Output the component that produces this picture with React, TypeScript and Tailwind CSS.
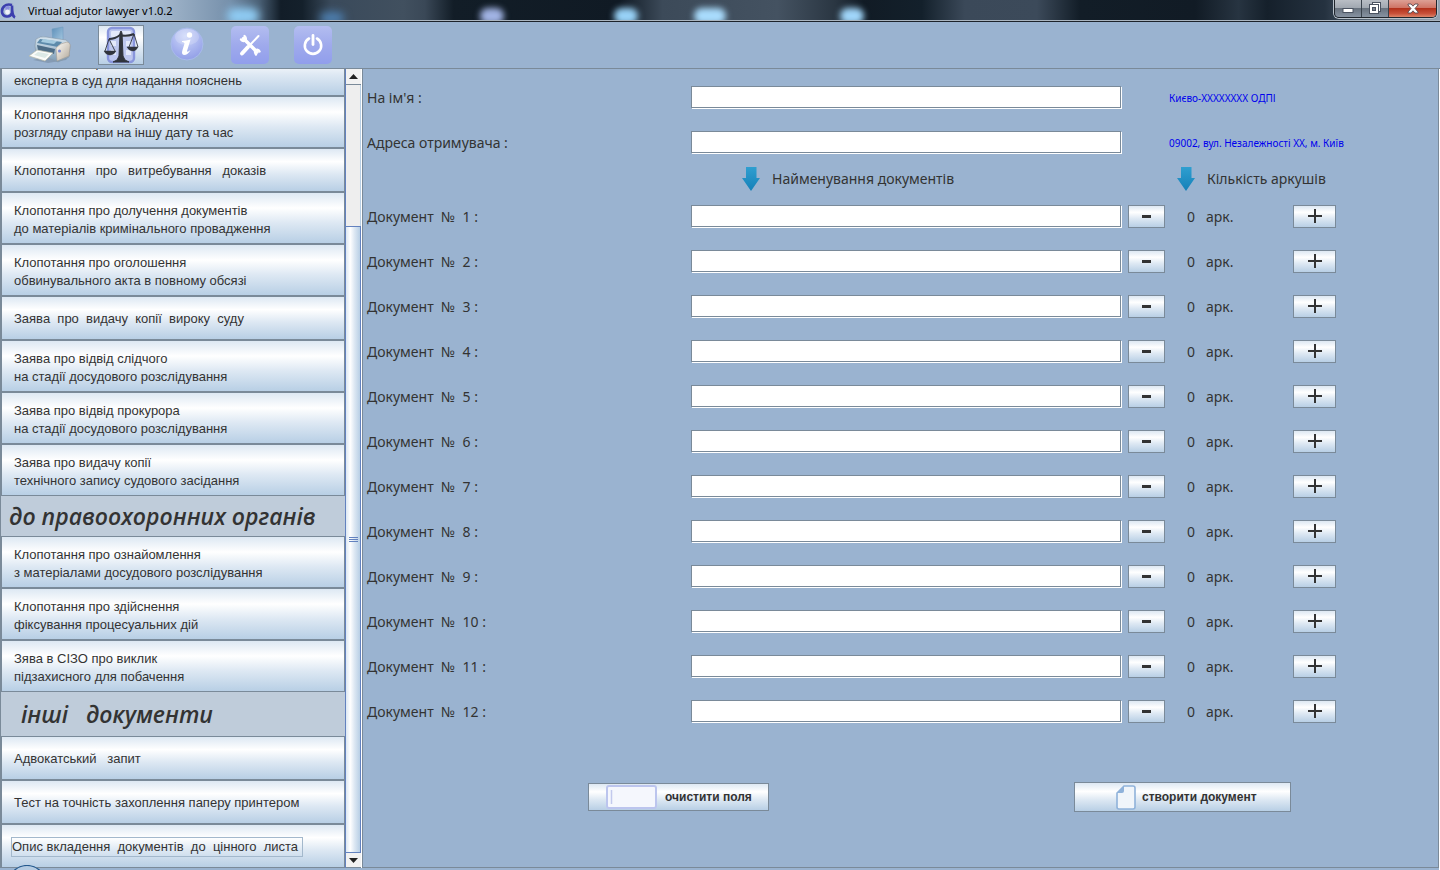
import React, { useState } from "react";

type Entry = { kind: "item"; lines: string[]; focused?: boolean } | { kind: "title"; text: string; tall?: boolean };

const entries: Entry[] = [
  { kind: "item", lines: ["Клопотання про виклик", "експерта в суд для надання пояснень"] },
  { kind: "item", lines: ["Клопотання про відкладення", "розгляду справи на іншу дату та час"] },
  { kind: "item", lines: ["Клопотання   про   витребування   доказів"] },
  { kind: "item", lines: ["Клопотання про долучення документів", "до матеріалів кримінального провадження"] },
  { kind: "item", lines: ["Клопотання про оголошення", "обвинувального акта в повному обсязі"] },
  { kind: "item", lines: ["Заява  про  видачу  копії  вироку  суду"] },
  { kind: "item", lines: ["Заява про відвід слідчого", "на стадії досудового розслідування"] },
  { kind: "item", lines: ["Заява про відвід прокурора", "на стадії досудового розслідування"] },
  { kind: "item", lines: ["Заява про видачу копії", "технічного запису судового засідання"] },
  { kind: "title", text: "до правоохоронних органів" },
  { kind: "item", lines: ["Клопотання про ознайомлення", "з матеріалами досудового розслідування"] },
  { kind: "item", lines: ["Клопотання про здійснення", "фіксування процесуальних дій"] },
  { kind: "item", lines: ["Зява в СІЗО про виклик", "підзахисного для побачення"] },
  { kind: "title", text: "інші   документи", tall: true },
  { kind: "item", lines: ["Адвокатський   запит"] },
  { kind: "item", lines: ["Тест на точність захоплення паперу принтером"] },
  { kind: "item", lines: ["Опис вкладення  документів  до  цінного  листа"], focused: true },
];

const metal = "border border-[#7a8a99] bg-[linear-gradient(#dde8f3_0%,#ffffff_30%,#dde8f3_60%,#b8cfe5_100%)]";
const field = "block h-[22px] w-full border border-[#7a8a99] bg-white px-1 text-[15px] text-[#333] shadow-[1px_1px_0_#fff] outline-none";

function AppLogo() {
  return (
    <svg width="16" height="18" viewBox="0 0 16 18" fill="none" aria-hidden="true">
      <path d="M12 3 C5 1 1.500 6 2 10 C2.500 15 10 16.500 12 11 V3.500 C12 9 12 14 15 15.500" stroke="#3b3fae" strokeWidth="2.600" />
      <path d="M5 5 Q8 3 10 5 L9 8 L6 9 Z" fill="#8a8fdf" />
      <circle cx="7.500" cy="10" r="2.400" fill="#eef1fa" />
    </svg>
  );
}

function PrinterIcon() {
  return (
    <svg width="44" height="38" viewBox="0 0 44 38" aria-hidden="true">
      <defs>
        <linearGradient id="pr-paper" x1="0" y1="0" x2="1" y2="1">
          <stop offset="0" stopColor="#5d8fb9" />
          <stop offset="1" stopColor="#a9cbe3" />
        </linearGradient>
        <linearGradient id="pr-body" x1="0" y1="0" x2="0" y2="1">
          <stop offset="0" stopColor="#d8e6f0" />
          <stop offset="1" stopColor="#7c9bb5" />
        </linearGradient>
        <linearGradient id="pr-side" x1="0" y1="0" x2="1" y2="1">
          <stop offset="0" stopColor="#fffdf8" />
          <stop offset="1" stopColor="#b0a698" />
        </linearGradient>
      </defs>
      <path d="M5 34 L20 37 L38 34 L42 29 L20 30 Z" fill="#6d7f93" opacity=".45" />
      <path d="M24 3 L35 1 L35 17 L25 16 Z" fill="url(#pr-paper)" stroke="#6f9cc0" strokeWidth=".6" />
      <path d="M8 13 Q12 10 18 11 L38 14 Q42 16 42 20 L41 31 L30 36 L8 27 Q6 20 8 13Z" fill="url(#pr-body)" stroke="#8797a6" strokeWidth=".6" />
      <path d="M12 13 L34 16 L30 21 L9 17Z" fill="#5e8bab" />
      <path d="M15 13 L29 15 L26 18 L13 16Z" fill="#a4cadf" />
      <path d="M9 19 L27 23 L26 28 L10 24Z" fill="#4d6c86" />
      <path d="M28 22 Q32 17 39 16 Q43 17 42 21 L41 30 L29 35Z" fill="url(#pr-side)" stroke="#a49c94" strokeWidth=".6" />
      <circle cx="31.500" cy="25" r="1.500" fill="#7886d0" />
      <path d="M9 24 L25 27 L17 35 L1 30Z" fill="#fbfcfa" stroke="#b5b7a8" strokeWidth=".7" />
      <path d="M10 26 L21 28 L17 32 L6 29Z" fill="#dce9e6" />
    </svg>
  );
}

function ScalesIcon() {
  return (
    <svg width="36" height="38" viewBox="0 0 36 38" aria-hidden="true">
      <rect x="5" y="2" width="26" height="34" rx="4" fill="#bdc7ee" stroke="#8996dc" strokeWidth="2.400" />
      <g fill="#e3e9fa">
        <rect x="8" y="5" width="20" height="6" rx="1" />
        <rect x="8" y="15" width="5" height="5" />
        <rect x="23" y="15" width="5" height="5" />
        <rect x="8" y="24" width="5" height="5" />
        <rect x="23" y="24" width="5" height="5" />
      </g>
      <g fill="#30343c" stroke="#30343c">
        <path d="M17 7 L18 5 L19 7 L20 30 L22 34 L26 36 H10 L14 34 L16 30Z" />
        <path d="M6 13 Q12 13 17 9 Q23 11 31 8" fill="none" strokeWidth="2" />
        <path d="M6 13 L2 25 M6 13 L12 25 M31 8 L26 21 M31 8 L35 21" fill="none" strokeWidth=".9" />
        <path d="M1 25 H13 Q11 29 7 29 Q3 29 1 25Z M24 21 H35 Q33 25 30 25 Q26 25 24 21Z" strokeWidth=".5" />
      </g>
    </svg>
  );
}

function InfoIcon() {
  return (
    <svg width="34" height="38" viewBox="0 0 34 38" aria-hidden="true">
      <defs>
        <radialGradient id="info-orb" cx=".45" cy=".25" r=".8">
          <stop offset="0" stopColor="#cfd9fa" />
          <stop offset=".6" stopColor="#a7b3ee" />
          <stop offset="1" stopColor="#8f9ce6" />
        </radialGradient>
      </defs>
      <circle cx="17" cy="18" r="16" fill="url(#info-orb)" stroke="#a8bbea" />
      <ellipse cx="17" cy="11" rx="12" ry="8" fill="#fff" opacity=".18" />
      <circle cx="19.500" cy="9" r="2.700" fill="#fff" />
      <path d="M12 15 Q16 14.500 20.500 13.500 L17 25 Q17 27 20.500 24 Q18 29 14 29 Q11 28.500 12.500 24 L14.500 17.500 Q14.500 16 12 16Z" fill="#fff" />
    </svg>
  );
}

function Tile({ children }: { children: React.ReactNode }) {
  return (
    <svg width="38" height="38" viewBox="0 0 38 38" fill="none" aria-hidden="true">
      <defs>
        <linearGradient id="tile-fill" x1="0" y1="0" x2="0" y2="1">
          <stop offset="0" stopColor="#b3bdf0" />
          <stop offset=".5" stopColor="#9faaec" />
          <stop offset="1" stopColor="#919eec" />
        </linearGradient>
      </defs>
      <rect width="38" height="38" rx="5" fill="url(#tile-fill)" />
      {children}
    </svg>
  );
}

function ToolsIcon() {
  return (
    <Tile>
      <g stroke="#fff" strokeLinecap="round">
        <path d="M12.500 12.500 L26 26" strokeWidth="3.400" />
        <path d="M27.500 10 L18 20" strokeWidth="2" />
        <path d="M17 21 L11 27.500" strokeWidth="4" />
        <path d="M10 13.500 Q12 16 14.500 14.500 Q15.500 12 13.500 10" strokeWidth="2.400" />
        <path d="M25 28.500 Q23 25.500 25 24 Q27.500 23 28.500 25.500" strokeWidth="2.400" />
      </g>
    </Tile>
  );
}

function PowerIcon() {
  return (
    <Tile>
      <path d="M15 12.500 A8.200 8.200 0 1 0 23 12.500" stroke="#fff" strokeWidth="2.600" strokeLinecap="round" />
      <path d="M19 9.500 V18.500" stroke="#fff" strokeWidth="2.800" strokeLinecap="round" />
    </Tile>
  );
}

function DownArrow() {
  return (
    <svg width="18" height="24" viewBox="0 0 18 24" className="shrink-0" aria-hidden="true">
      <defs>
        <linearGradient id="down-fill" x1="0" y1="0" x2="0" y2="1">
          <stop offset="0" stopColor="#2f9fd0" />
          <stop offset="1" stopColor="#1580b8" />
        </linearGradient>
      </defs>
      <path d="M4 0 H14.500 V11 H18 L9 24 L0 11 H4Z" fill="url(#down-fill)" />
    </svg>
  );
}

function WindowControls() {
  return (
    <div className="flex h-[18px] overflow-hidden rounded-b-[5px] border border-t-0 border-[#20262d] shadow-[0_0_0_1px_#b9c2cb]">
      <button aria-label="Згорнути" className="flex w-[27px] items-center justify-center border-r border-[#39424c] bg-[linear-gradient(#b9bec5_0%,#a1a8b1_45%,#69737f_50%,#8793a2_100%)]">
        <svg width="12" height="14" viewBox="0 0 12 14" aria-hidden="true">
          <rect x="1" y="6.500" width="10" height="4" fill="#fff" stroke="#4b5361" />
        </svg>
      </button>
      <button aria-label="Відновити" className="flex w-[27px] items-center justify-center border-r border-[#39424c] bg-[linear-gradient(#b9bec5_0%,#a1a8b1_45%,#69737f_50%,#8793a2_100%)]">
        <svg width="14" height="14" viewBox="0 0 14 14" aria-hidden="true">
          <rect x="4.500" y=".5" width="8" height="9" fill="#fff" stroke="#4b5361" />
          <rect x="1.500" y="2.500" width="9" height="9" fill="#fff" stroke="#4b5361" />
          <rect x="4.500" y="5.500" width="3" height="3" fill="#7b8491" stroke="#4b5361" />
        </svg>
      </button>
      <button aria-label="Закрити" className="flex w-[47px] items-center justify-center bg-[linear-gradient(#dda095_0%,#cf7566_45%,#b3321c_50%,#c8513a_80%,#dc8468_100%)]">
        <svg width="12" height="11" viewBox="0 0 12 11" aria-hidden="true">
          <path d="M1 1 H4 L6 3.200 L8 1 H11 V2 L8 5.500 L11 9 V10 H8 L6 7.800 L4 10 H1 V9 L4 5.500 L1 2Z" fill="#fff" stroke="#5a4a50" strokeWidth=".9" />
        </svg>
      </button>
    </div>
  );
}

function TitleBar() {
  return (
    <header className="flex h-[22px] shrink-0 items-start justify-between border-b border-[#1d232b] bg-[linear-gradient(90deg,#a9bed3_0%,#c6d3e2_6%,#a4b8cd_11%,#7690ab_16%,#4a6075_18%,#121d28_19.500%,#14202b_21%,#3a4a5b_23%,#41505f_28%,#3a4857_29.500%,#121d27_31.500%,#101a24_43%,#3c4a59_46%,#445261_54%,#2a3642_58%,#111b25_60%,#13202b_64%,#3b4959_67%,#3c4a5a_72%,#121d27_75%,#111b25_83%,#273441_86%,#15202b_88%,#253240_92%,#6b7b8b_96%,#93a3b2_100%)] shadow-[inset_0_-1px_0_#aab5c0]">
      <div className="relative h-5 w-full">
        <div className="absolute inset-0 overflow-hidden" aria-hidden="true">
          <span className="absolute left-[17%] top-2 h-4 w-8 rounded-full bg-[#8fccf4] blur-[4px]" />
          <span className="absolute left-[24%] top-3 h-3 w-6 rounded-full bg-[#4d7fb0] blur-[4px]" />
          <span className="absolute left-[36%] top-2 h-4 w-6 rounded-full bg-[#a1b3e4] blur-[3px]" />
          <span className="absolute left-[46%] top-2 h-4 w-6 rounded-full bg-[#98d2f7] blur-[3px]" />
          <span className="absolute left-[52%] top-2 h-4 w-8 rounded-full bg-[#a9dcfd] blur-[3px]" />
          <span className="absolute left-[63%] top-2 h-4 w-6 rounded-full bg-[#a0d6fa] blur-[3px]" />
        </div>
        <div className="relative flex h-[22px] items-center gap-3">
          <AppLogo />
          <h1 className="font-['Noto_Sans',sans-serif] text-[11px] leading-5 text-black">Virtual adjutor lawyer v1.0.2</h1>
        </div>
      </div>
      <div className="pr-[3px]">
        <WindowControls />
      </div>
    </header>
  );
}

function Sidebar() {
  return (
    <aside className="relative flex w-[362px] shrink-0 border-r border-white">
      <nav className="flex min-w-0 flex-1 flex-col justify-end overflow-hidden border-l border-[#7a8a99] bg-[#bfccda]">
        {entries.map((entry, i) =>
          entry.kind === "title" ? (
            <h2
              key={i}
              className={`flex shrink-0 items-center whitespace-pre font-['Open_Sans','Noto_Sans',sans-serif] font-semibold italic text-[#333] ${entry.tall ? "h-11 pl-5 text-[23px]" : "h-10 pl-2 text-[23px]"}`}
            >
              {entry.text}
            </h2>
          ) : (
            <button
              key={i}
              className={`flex shrink-0 items-center whitespace-pre text-left text-[13px] leading-[18px] text-[#333] ${metal} ${entry.lines.length > 1 ? "h-[52px] pt-1" : "h-11 pt-0.5"} ${entry.focused ? "pl-[9px]" : "pl-3"}`}
            >
              <span className={entry.focused ? "border border-[#a3b8cc] pr-1" : ""}>{entry.lines.join("\n")}</span>
            </button>
          ),
        )}
      </nav>
      <div className="flex w-4 shrink-0 flex-col border-l border-[#6382bf] bg-[#eee]" aria-hidden="true">
        <div className="flex h-4 items-center justify-center border-b border-[#7a8a99] bg-[#f2f2f2]">
          <svg width="9" height="5" viewBox="0 0 9 5"><path d="M4.500 0 L9 5 H0Z" fill="#222" /></svg>
        </div>
        <div className="h-[141px] border-r border-[#b8cfe5]" />
        <div className="flex flex-1 flex-col items-center justify-center gap-px border-y border-r border-[#6382bf] bg-[linear-gradient(90deg,#dde8f3_0%,#fff_30%,#dde8f3_60%,#b8cfe5_100%)]">
          <span className="h-px w-[9px] bg-[#6382bf]" />
          <span className="h-px w-[9px] bg-[#6382bf]" />
          <span className="h-px w-[9px] bg-[#6382bf]" />
        </div>
        <div className="flex h-[15px] items-center justify-center border-b border-[#7a8a99] bg-[#f2f2f2]">
          <svg width="9" height="5" viewBox="0 0 9 5"><path d="M0 0 H9 L4.500 5Z" fill="#222" /></svg>
        </div>
      </div>
    </aside>
  );
}

const formCols = "grid grid-cols-[324fr_437fr_310fr]";
const docCols = "grid grid-cols-[324fr_437fr_59fr_106fr_43fr_102fr]";
const label = "font-['Noto_Sans',sans-serif] text-[14px] leading-6 text-[#333] whitespace-pre";

function RecipientRow({ id, name, hint }: { id: string; name: string; hint: string }) {
  return (
    <div className={`${formCols} h-6`}>
      <label htmlFor={id} className={label}>{name}</label>
      <div className="pr-[7px]"><input id={id} type="text" className={field} /></div>
      <span className="whitespace-nowrap pl-[41px] font-['Noto_Sans',sans-serif] text-[10px] leading-6 text-[#0000ee]">{hint}</span>
    </div>
  );
}

function DocumentRow({ n }: { n: number }) {
  const [count, setCount] = useState(0);
  const id = `doc-${n}`;
  return (
    <div className={`${docCols} h-6`}>
      <label htmlFor={id} className={label}>{`Документ  №  ${n} :`}</label>
      <div className="pr-[7px]"><input id={id} type="text" className={field} /></div>
      <button aria-label={`Менше аркушів ${n}`} onClick={() => setCount(Math.max(0, count - 1))} className={`flex h-[23px] w-[37px] items-center justify-center ${metal}`}>
        <svg width="9" height="3" viewBox="0 0 9 3" aria-hidden="true"><path d="M0 0 H9 V3 H0Z" fill="#333" /></svg>
      </button>
      <span className={label}>{`${count}   арк.`}</span>
      <button aria-label={`Більше аркушів ${n}`} onClick={() => setCount(count + 1)} className={`flex h-[23px] w-full items-center justify-center pb-px ${metal}`}>
        <svg width="14" height="14" viewBox="0 0 14 14" aria-hidden="true"><path d="M6 0 H8 V6 H14 V8 H8 V14 H6 V8 H0 V6 H6Z" fill="#333" /></svg>
      </button>
    </div>
  );
}

export default function App() {
  return (
    <div className="flex h-screen min-h-[870px] flex-col overflow-hidden bg-[#9ab3d0] font-['Liberation_Sans',Arial,sans-serif] text-[#333]">
      <TitleBar />
      <div className="flex h-[47px] shrink-0 items-center border-b border-[#7a8a99] pl-7" role="toolbar">
        <button aria-label="Друк" className="flex w-[70px]"><PrinterIcon /></button>
        <button aria-label="Документи" className={`mr-[26px] flex h-10 w-[46px] items-center justify-center ${metal}`}><ScalesIcon /></button>
        <button aria-label="Інформація" className="mr-[27px]"><InfoIcon /></button>
        <button aria-label="Налаштування" className="mr-[25px]"><ToolsIcon /></button>
        <button aria-label="Вихід"><PowerIcon /></button>
      </div>
      <div className="relative flex min-h-0 flex-1 border-r border-white pb-0.5">
        <Sidebar />
        <main className="min-w-0 flex-1 border-x border-b border-[#7a8a99] pl-1 pt-[17px]">
          <div className="flex flex-col gap-[21px]">
            <RecipientRow id="recipient" name="На ім'я :" hint="Києво-XXXXXXXX ОДПІ" />
            <RecipientRow id="address" name="Адреса отримувача :" hint="09002, вул. Незалежності XX, м. Київ" />
          </div>
          <div className={`${formCols} pb-3.5 pt-3`}>
            <span />
            <div className="flex items-center gap-3 pl-[51px]"><DownArrow /><span className={label}>Найменування документів</span></div>
            <div className="flex items-center gap-3 pl-[49px]"><DownArrow /><span className={label}>Кількість аркушів</span></div>
          </div>
          <div className="flex flex-col gap-[21px]">
            {Array.from({ length: 12 }, (_, i) => <DocumentRow key={i} n={i + 1} />)}
          </div>
          <div className="grid grid-cols-[221fr_486fr_364fr] items-center pt-[58px]">
            <span />
            <div>
              <button className={`flex h-7 w-[181px] items-center gap-2 pl-[17px] text-xs font-bold ${metal}`}>
                <svg width="51" height="24" viewBox="0 0 51 24" aria-hidden="true">
                  <rect x="1" y="1" width="49" height="22" rx="2" fill="#f5f7fd" stroke="#bcc5ee" strokeWidth="2" />
                  <path d="M5.500 5 V19" stroke="#c3c9ed" strokeWidth="1.500" />
                </svg>
                очистити поля
              </button>
            </div>
            <div>
              <button className={`flex h-[30px] w-[217px] items-center gap-1.5 pl-[41px] text-xs font-bold ${metal}`}>
                <svg width="20" height="25" viewBox="0 0 20 25" aria-hidden="true">
                  <path d="M8 1 H17 Q19 1 19 3 V22 Q19 24 17 24 H3 Q1 24 1 22 V8Z" fill="#f0f5fa" stroke="#8fb2da" strokeWidth="1.600" />
                  <path d="M8 1 V6 Q8 8 6 8 H1Z" fill="#8fb2da" />
                </svg>
                створити документ
              </button>
            </div>
          </div>
        </main>
        <svg className="absolute bottom-0 left-3.5" width="26" height="5" viewBox="0 0 26 5" aria-hidden="true">
          <ellipse cx="13" cy="13" rx="16" ry="12.500" fill="#b4cbe2" stroke="#24598e" strokeWidth="1.200" />
        </svg>
      </div>
    </div>
  );
}
